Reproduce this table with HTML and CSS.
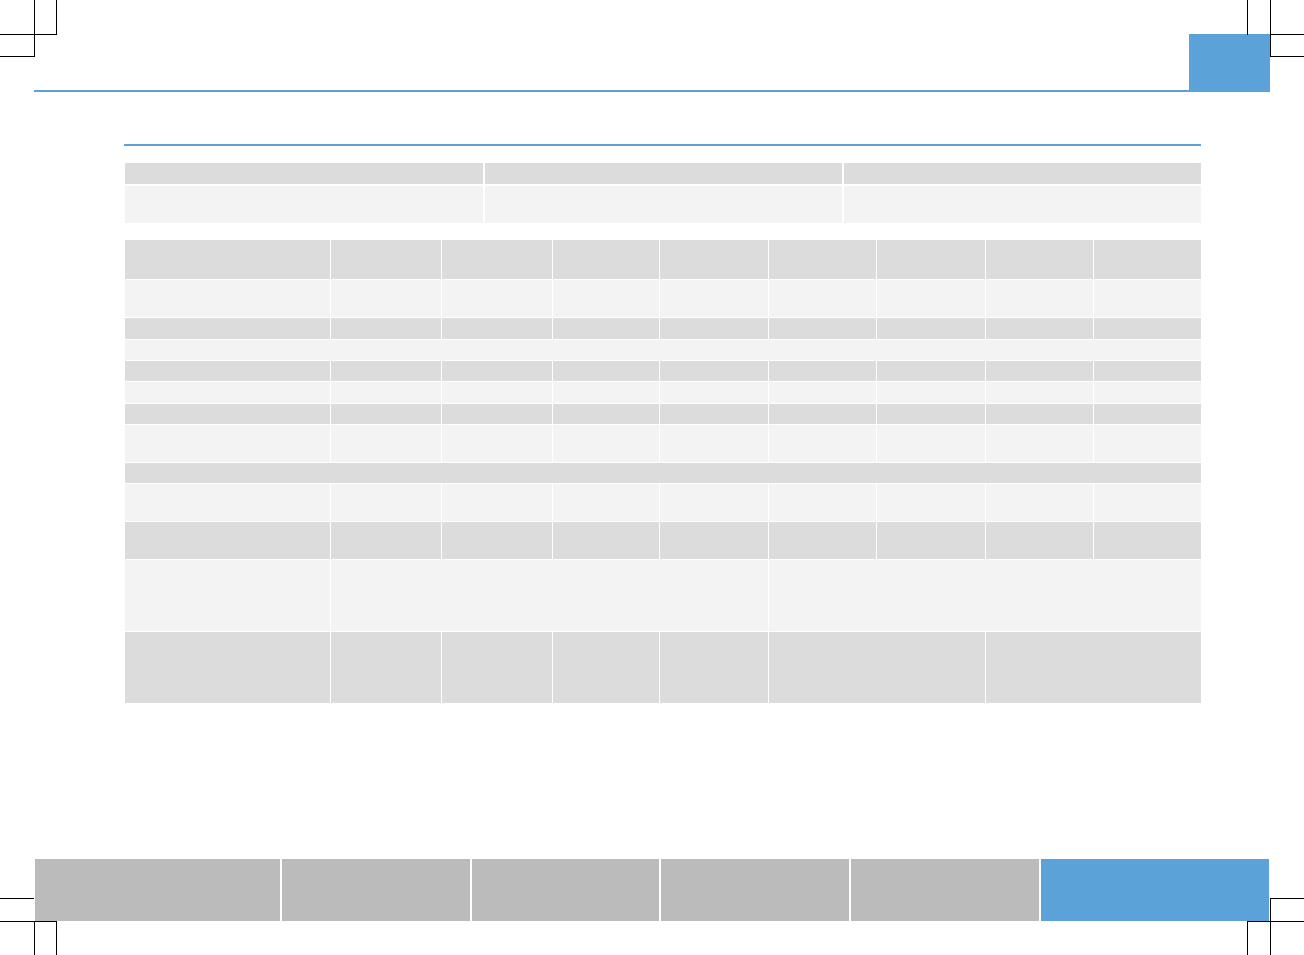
FILE: index.html
```html
<!DOCTYPE html>
<html lang="en">
<head>
<meta charset="utf-8">
<title>Page</title>
<link rel="stylesheet" href="styles.css">
</head>
<body>
<div class="page">
  <svg class="crop-marks" width="1304" height="955" viewBox="0 0 1304 955" aria-hidden="true">
    <g stroke="#000" stroke-width="1" fill="none" shape-rendering="crispEdges">
      <line x1="34.5" y1="0" x2="34.5" y2="57"/>
      <line x1="56.5" y1="0" x2="56.5" y2="35"/>
      <line x1="0" y1="34.5" x2="57" y2="34.5"/>
      <line x1="0" y1="56.5" x2="35" y2="56.5"/>

      <line x1="1247.5" y1="0" x2="1247.5" y2="35"/>
      <line x1="1270.5" y1="0" x2="1270.5" y2="57"/>
      <line x1="1270" y1="34.5" x2="1304" y2="34.5"/>
      <line x1="1270" y1="56.5" x2="1304" y2="56.5"/>

      <line x1="0" y1="898.5" x2="34" y2="898.5"/>
      <line x1="0" y1="921.5" x2="57" y2="921.5"/>
      <line x1="34.5" y1="921" x2="34.5" y2="955"/>
      <line x1="56.5" y1="921" x2="56.5" y2="955"/>

      <line x1="1270" y1="898.5" x2="1304" y2="898.5"/>
      <line x1="1247" y1="921.5" x2="1304" y2="921.5"/>
      <line x1="1270.5" y1="898" x2="1270.5" y2="955"/>
      <line x1="1247.5" y1="921" x2="1247.5" y2="955"/>
    </g>
  </svg>

  <header class="top">
    <div class="top-line"></div>
    <div class="top-tab"></div>
  </header>

  <main class="content">
    <div class="rule"></div>

    <div class="table-a">
      <div class="cell dark"></div>
      <div class="cell dark"></div>
      <div class="cell dark"></div>
      <div class="cell light"></div>
      <div class="cell light"></div>
      <div class="cell light"></div>
    </div>

    <div class="table-b">
      <!-- row 1 -->
      <div class="cell dark"></div><div class="cell dark"></div><div class="cell dark"></div>
      <div class="cell dark"></div><div class="cell dark"></div><div class="cell dark"></div>
      <div class="cell dark"></div><div class="cell dark"></div><div class="cell dark"></div>
      <!-- row 2 -->
      <div class="cell light"></div><div class="cell light"></div><div class="cell light"></div>
      <div class="cell light"></div><div class="cell light"></div><div class="cell light"></div>
      <div class="cell light"></div><div class="cell light"></div><div class="cell light"></div>
      <!-- row 3 -->
      <div class="cell dark"></div><div class="cell dark"></div><div class="cell dark"></div>
      <div class="cell dark"></div><div class="cell dark"></div><div class="cell dark"></div>
      <div class="cell dark"></div><div class="cell dark"></div><div class="cell dark"></div>
      <!-- row 4 -->
      <div class="cell light span-all"></div>
      <!-- row 5 -->
      <div class="cell dark"></div><div class="cell dark"></div><div class="cell dark"></div>
      <div class="cell dark"></div><div class="cell dark"></div><div class="cell dark"></div>
      <div class="cell dark"></div><div class="cell dark"></div><div class="cell dark"></div>
      <!-- row 6 -->
      <div class="cell light"></div><div class="cell light"></div><div class="cell light"></div>
      <div class="cell light"></div><div class="cell light"></div><div class="cell light"></div>
      <div class="cell light"></div><div class="cell light"></div><div class="cell light"></div>
      <!-- row 7 -->
      <div class="cell dark"></div><div class="cell dark"></div><div class="cell dark"></div>
      <div class="cell dark"></div><div class="cell dark"></div><div class="cell dark"></div>
      <div class="cell dark"></div><div class="cell dark"></div><div class="cell dark"></div>
      <!-- row 8 -->
      <div class="cell light"></div><div class="cell light"></div><div class="cell light"></div>
      <div class="cell light"></div><div class="cell light"></div><div class="cell light"></div>
      <div class="cell light"></div><div class="cell light"></div><div class="cell light"></div>
      <!-- row 9 -->
      <div class="cell dark span-all"></div>
      <!-- row 10 -->
      <div class="cell light"></div><div class="cell light"></div><div class="cell light"></div>
      <div class="cell light"></div><div class="cell light"></div><div class="cell light"></div>
      <div class="cell light"></div><div class="cell light"></div><div class="cell light"></div>
      <!-- row 11 -->
      <div class="cell dark"></div><div class="cell dark"></div><div class="cell dark"></div>
      <div class="cell dark"></div><div class="cell dark"></div><div class="cell dark"></div>
      <div class="cell dark"></div><div class="cell dark"></div><div class="cell dark"></div>
      <!-- row 12 -->
      <div class="cell light"></div>
      <div class="cell light span-4"></div>
      <div class="cell light span-4"></div>
      <!-- row 13 -->
      <div class="cell dark"></div><div class="cell dark"></div><div class="cell dark"></div>
      <div class="cell dark"></div><div class="cell dark"></div>
      <div class="cell dark span-2"></div>
      <div class="cell dark span-2"></div>
    </div>
  </main>

  <footer class="nav">
    <div class="nav-item"></div>
    <div class="nav-item"></div>
    <div class="nav-item"></div>
    <div class="nav-item"></div>
    <div class="nav-item"></div>
    <div class="nav-item active"></div>
  </footer>
</div>
</body>
</html>
```

FILE: styles.css
```css
html, body {
  margin: 0;
  padding: 0;
  background: #ffffff;
  font-family: "Liberation Sans", Arial, sans-serif;
}

.page {
  position: relative;
  width: 1304px;
  height: 955px;
  display: flex;
  flex-direction: column;
  overflow: hidden;
}

.crop-marks {
  position: absolute;
  left: 0;
  top: 0;
  pointer-events: none;
}

.top {
  display: flex;
  align-items: flex-end;
  height: 58px;
  padding: 34px 34px 0 34px;
}

.top-line {
  flex: 1;
  height: 2px;
  background: #5ba2d8;
}

.top-tab {
  width: 81px;
  height: 58px;
  background: #5ba2d8;
}

.content {
  padding: 52px 103px 0 124px;
}

.rule {
  height: 2px;
  background: #5ba2d8;
}

.cell.dark {
  background: #dcdcdc;
}

.cell.light {
  background: #f3f3f3;
}

.table-a {
  display: grid;
  grid-template-columns: 358px 357px 357px;
  grid-template-rows: 21px 37px;
  column-gap: 2px;
  row-gap: 2px;
  margin: 17px 0 0 1px;
}

.table-b {
  display: grid;
  grid-template-columns: 205px 110px 110px 106px 108px 107px 108px 107px 107px;
  grid-template-rows: 39px 37px 21px 20px 20px 21px 20px 37px 20px 37px 37px 71px 71px;
  column-gap: 1px;
  row-gap: 1px;
  margin: 17px 0 0 1px;
}

.span-all {
  grid-column: 1 / -1;
}

.span-4 {
  grid-column: span 4;
}

.span-2 {
  grid-column: span 2;
}

.nav {
  margin-top: auto;
  margin-bottom: 34px;
  margin-left: 35px;
  display: grid;
  grid-template-columns: 245px 188px 187px 188px 188px 228px;
  column-gap: 2px;
  height: 62px;
}

.nav-item {
  background: #bbbbbb;
}

.nav-item.active {
  background: #5ba2d8;
}
```
